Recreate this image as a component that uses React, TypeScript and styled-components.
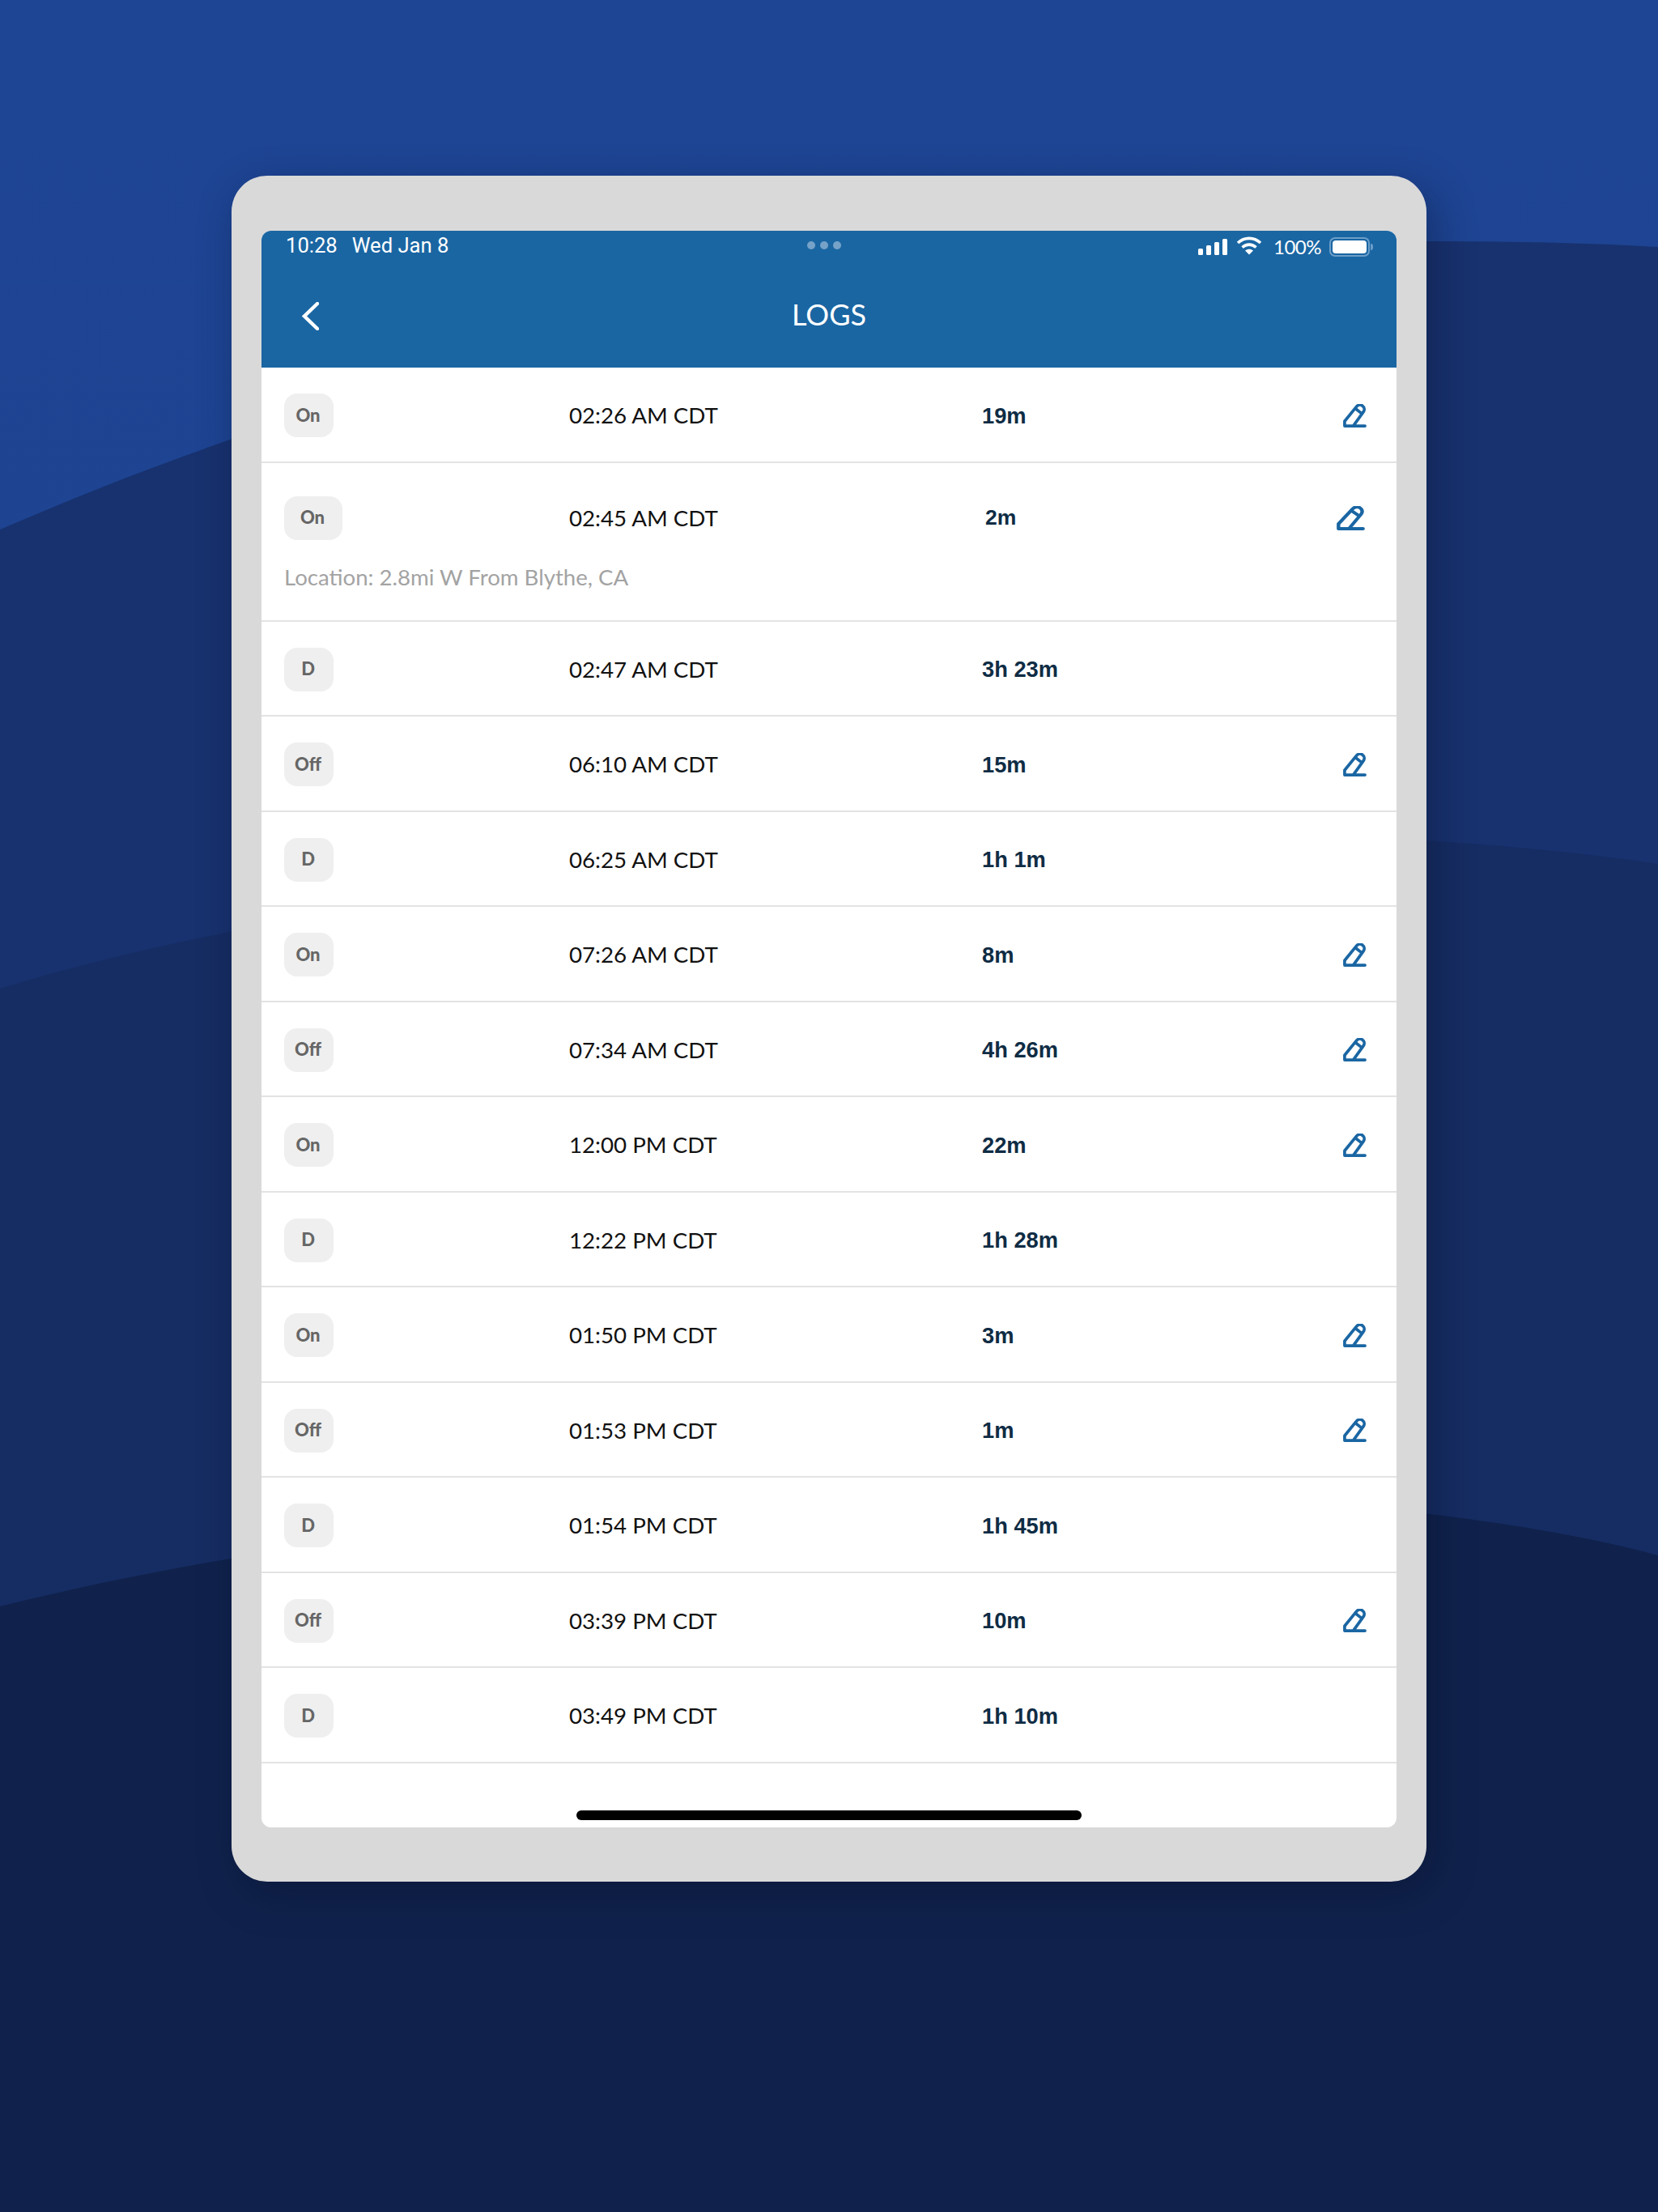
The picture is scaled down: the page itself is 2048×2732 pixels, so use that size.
import React from "react";
import styled, { createGlobalStyle } from "styled-components";

type LogEntry = {
  status: string;
  time: string;
  duration: string;
  editable?: boolean;
  location?: string;
};

const logs: LogEntry[] = [
  { status: "On", time: "02:26 AM CDT", duration: "19m", editable: true },
  {
    status: "On",
    time: "02:45 AM CDT",
    duration: "2m",
    editable: true,
    location: "Location: 2.8mi W From Blythe, CA",
  },
  { status: "D", time: "02:47 AM CDT", duration: "3h 23m" },
  { status: "Off", time: "06:10 AM CDT", duration: "15m", editable: true },
  { status: "D", time: "06:25 AM CDT", duration: "1h 1m" },
  { status: "On", time: "07:26 AM CDT", duration: "8m", editable: true },
  { status: "Off", time: "07:34 AM CDT", duration: "4h 26m", editable: true },
  { status: "On", time: "12:00 PM CDT", duration: "22m", editable: true },
  { status: "D", time: "12:22 PM CDT", duration: "1h 28m" },
  { status: "On", time: "01:50 PM CDT", duration: "3m", editable: true },
  { status: "Off", time: "01:53 PM CDT", duration: "1m", editable: true },
  { status: "D", time: "01:54 PM CDT", duration: "1h 45m" },
  { status: "Off", time: "03:39 PM CDT", duration: "10m", editable: true },
  { status: "D", time: "03:49 PM CDT", duration: "1h 10m" },
];

function Pencil({ large }: { large: boolean }) {
  return (
    <PencilSvg $large={large} viewBox="0 0 30 30" preserveAspectRatio="none">
      <path d="M2 28 V22 L17 3.5 a5 5 0 0 1 9 6.5 L13 28 H28 M2 28 H13" />
      <path d="M16 6 L23 11.5" />
    </PencilSvg>
  );
}

function App() {
  return (
    <>
      <GlobalStyle />
      <Page>
        <Backdrop viewBox="0 0 2048 2732" preserveAspectRatio="none">
          <path
            fill="#18326f"
            d="M0 654 C400 480 1000 298 1762 298 C1870 298 1960 300 2048 305 V2732 H0 Z"
          />
          <path
            fill="#162d63"
            d="M0 1221 C400 1100 1000 1037 1500 1030 C1700 1030 1900 1045 2048 1067 V2732 H0 Z"
          />
          <path
            fill="#10224c"
            d="M0 1984 C480 1865 1000 1845 1400 1845 C1650 1850 1900 1880 2048 1921 V2732 H0 Z"
          />
        </Backdrop>
        <Device>
          <Screen>
            <Header>
              <StatusBar>
                <Clock>
                  <span>10:28</span>
                  <span>Wed Jan 8</span>
                </Clock>
                <Dots>
                  <i />
                  <i />
                  <i />
                </Dots>
                <StatusIcons>
                  <svg width="36" height="20" viewBox="0 0 36 20" fill="#fff">
                    <rect x="0" y="12" width="6" height="8" rx="1.5" />
                    <rect x="10" y="8" width="6" height="12" rx="1.5" />
                    <rect x="20" y="4" width="6" height="16" rx="1.5" />
                    <rect x="30" y="0" width="6" height="20" rx="1.5" />
                  </svg>
                  <WifiIcon viewBox="0 0 32 23" fill="none" stroke="#fff" strokeWidth="3.6">
                    <path d="M2 8 C10 0.5 22 0.5 30 8" />
                    <path d="M7.5 13.5 C12.5 9 19.5 9 24.5 13.5" />
                    <path d="M16 22.5 L11 17.5 C14 15.2 18 15.2 21 17.5 Z" fill="#fff" stroke="none" />
                  </WifiIcon>
                  <Percent>100%</Percent>
                  <Battery />
                </StatusIcons>
              </StatusBar>
              <NavBar>
                <BackIcon viewBox="0 0 21 35" fill="none" stroke="#fff" strokeWidth="4.4" strokeLinecap="round">
                  <path d="M19 2 L3 17.5 L19 33" />
                </BackIcon>
                <Title>LOGS</Title>
              </NavBar>
            </Header>
            <List>
              {logs.map((log) => {
                const tall = Boolean(log.location);
                return (
                  <Row key={log.time} $tall={tall}>
                    <RowMain>
                      <Badge $wide={tall}>{log.status}</Badge>
                      <Time>{log.time}</Time>
                      <Duration $tall={tall}>{log.duration}</Duration>
                      <EditSlot>{log.editable && <Pencil large={tall} />}</EditSlot>
                    </RowMain>
                    {log.location && <Location>{log.location}</Location>}
                  </Row>
                );
              })}
            </List>
            <HomeArea>
              <HomeBar />
            </HomeArea>
          </Screen>
        </Device>
      </Page>
    </>
  );
}

const GlobalStyle = createGlobalStyle`
  html, body {
    margin: 0;
    padding: 0;
  }
  body {
    font-family: "Lato", "Liberation Sans", sans-serif;
  }
`;

const Page = styled.div`
  position: relative;
  width: 2048px;
  height: 2732px;
  overflow: hidden;
  box-sizing: border-box;
  padding-top: 217px;
  background: linear-gradient(180deg, #1e4594 0%, #1c3f8a 100%);
`;

const Backdrop = styled.svg`
  position: absolute;
  top: 0;
  left: 0;
  width: 2048px;
  height: 2732px;
`;

const Device = styled.div`
  position: relative;
  box-sizing: border-box;
  width: 1476px;
  height: 2107px;
  margin: 0 auto;
  padding: 68px 37px 67px;
  background: #d9d9d9;
  border-radius: 44px;
  box-shadow: 10px 16px 50px rgba(5, 12, 35, 0.35);
`;

const Screen = styled.div`
  display: flex;
  flex-direction: column;
  height: 1972px;
  background: #fff;
  border-radius: 12px;
  overflow: hidden;
`;

const Header = styled.header`
  height: 169px;
  flex: none;
  background: #1a66a3;
  color: #fff;
`;

const StatusBar = styled.div`
  position: relative;
  display: flex;
  align-items: center;
  justify-content: space-between;
  height: 36px;
  padding: 0 33px 0 30px;
`;

const Clock = styled.div`
  display: flex;
  gap: 18px;
  font-family: "Roboto", sans-serif;
  font-size: 25.6px;
`;

const Dots = styled.div`
  position: absolute;
  left: 674px;
  top: 13px;
  display: flex;
  gap: 6px;

  i {
    width: 10px;
    height: 10px;
    border-radius: 50%;
    background: #76a2c8;
  }
`;

const StatusIcons = styled.div`
  display: flex;
  align-items: center;
  padding-top: 3px;
`;

const WifiIcon = styled.svg`
  width: 32px;
  height: 23px;
  margin: -3px 0 0 11px;
`;

const Percent = styled.span`
  margin-left: 14px;
  font-size: 24px;
  font-weight: 400;
  letter-spacing: -0.5px;
`;

const Battery = styled.span`
  position: relative;
  box-sizing: border-box;
  width: 50px;
  height: 24px;
  margin-left: 10px;
  padding: 2px;
  border: 2px solid #6c9ec8;
  border-radius: 7px;

  &::before {
    content: "";
    display: block;
    height: 16px;
    background: #fff;
    border-radius: 4px;
  }

  &::after {
    content: "";
    position: absolute;
    right: -6px;
    top: 6px;
    width: 3px;
    height: 8px;
    border-radius: 0 3px 3px 0;
    background: #6c9ec8;
  }
`;

const NavBar = styled.div`
  position: relative;
  display: flex;
  align-items: center;
  justify-content: center;
  height: 133px;
  padding-bottom: 36px;
  box-sizing: border-box;
`;

const BackIcon = styled.svg`
  position: absolute;
  left: 50px;
  top: 52px;
  width: 21px;
  height: 35px;
`;

const Title = styled.h1`
  margin: 0;
  padding-top: 37px;
  font-size: 36px;
  font-weight: 400;
  line-height: 42px;
`;

const List = styled.div`
  display: flex;
  flex-direction: column;
`;

const Row = styled.div<{ $tall: boolean }>`
  box-sizing: border-box;
  height: ${(p) => (p.$tall ? "196px" : "117.5px")};
  padding: ${(p) => (p.$tall ? "41px" : "32px")} 37px 0 28px;
  border-bottom: 2px solid #e3e3e3;
`;

const RowMain = styled.div`
  display: grid;
  grid-template-columns: 352px 510px 1fr auto;
  align-items: center;
  height: 54px;
`;

const Badge = styled.div<{ $wide: boolean }>`
  display: flex;
  align-items: center;
  justify-content: center;
  box-sizing: border-box;
  width: ${(p) => (p.$wide ? "72px" : "61px")};
  height: 54px;
  padding: 0 2px 2px 0;
  background: #efefef;
  border-radius: 16px;
  color: #666;
  font-size: 22px;
  font-weight: 900;
`;

const Time = styled.div`
  padding-bottom: 1px;
  font-size: 27.7px;
  color: #111;
`;

const Duration = styled.div<{ $tall: boolean }>`
  margin-left: ${(p) => (p.$tall ? "4px" : "0")};
  padding-top: ${(p) => (p.$tall ? "0" : "1px")};
  font-family: "Liberation Sans", Arial, sans-serif;
  font-size: ${(p) => (p.$tall ? "26.5px" : "27.3px")};
  font-weight: 700;
  color: #0f2c44;
`;

const EditSlot = styled.div`
  display: flex;
  justify-content: flex-end;
`;

const PencilSvg = styled.svg<{ $large: boolean }>`
  display: block;
  width: ${(p) => (p.$large ? "35px" : "29px")};
  height: ${(p) => (p.$large ? "30px" : "29px")};
  margin-right: ${(p) => (p.$large ? "2px" : "0")};
  fill: none;
  stroke: #1a66a3;
  stroke-width: 3.8;
  stroke-linecap: round;
  stroke-linejoin: round;
`;

const Location = styled.div`
  margin-top: 29px;
  font-size: 27.6px;
  line-height: 34px;
  color: #a3a3a3;
`;

const HomeArea = styled.div`
  flex: 1;
  display: flex;
  align-items: flex-end;
  justify-content: center;
  padding-bottom: 9px;
`;

const HomeBar = styled.div`
  width: 624px;
  height: 12px;
  background: #000;
  border-radius: 6px;
`;

export default App;
